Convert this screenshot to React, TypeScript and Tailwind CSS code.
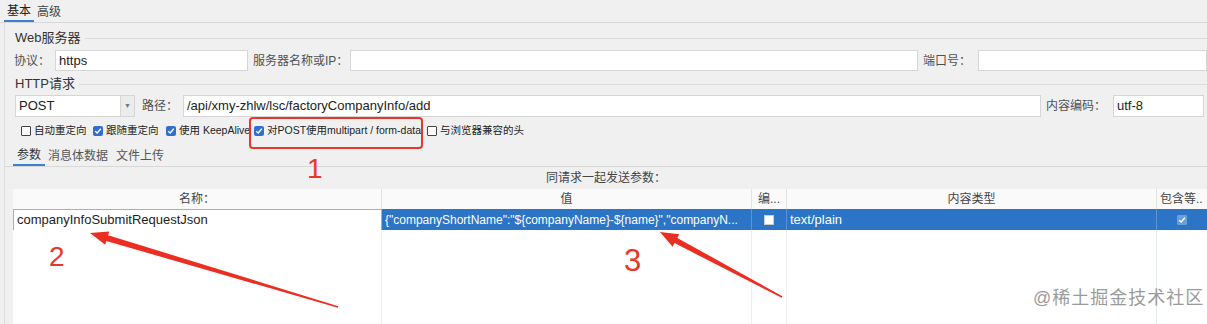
import React from "react";

const font = "font-['Liberation_Sans','Noto_Sans_CJK_SC',sans-serif]";

function Check({ on }: { on?: boolean }) {
	if (!on) return <span className="w-[10px] h-[10px] shrink-0 border border-[#444] bg-white rounded-[1px]" />;
	return (
		<span className="w-[10px] h-[10px] shrink-0 bg-[#2f6fce] rounded-[2px] flex items-center justify-center">
			<svg width="8" height="8" viewBox="0 0 8 8">
				<path d="M1.2 4.2 L3.2 6 L6.8 1.8" stroke="#fff" strokeWidth="1.4" fill="none" />
			</svg>
		</span>
	);
}

function Option({ on, label, w }: { on?: boolean; label: string; w: string }) {
	return (
		<div className={`flex items-center gap-[3px] shrink-0 ${w}`}>
			<Check on={on} />
			<span className="text-[10.5px] text-[#222] whitespace-nowrap">{label}</span>
		</div>
	);
}

function Section({ title }: { title: string }) {
	return (
		<div className="flex items-center h-[20px] pl-[10px] gap-[4px]">
			<span className="text-[13px] text-[#333] whitespace-nowrap">{title}</span>
			<div className="flex-1 border-t border-[#dcdcdc]" />
		</div>
	);
}

function Field({ w, value }: { w: string; value?: string }) {
	return (
		<div className={`h-full shrink-0 bg-white border border-[#d6d6d6] flex items-center px-[3px] text-[13px] text-[#222] ${w}`}>
			{value}
		</div>
	);
}

function Label({ w, text }: { w: string; text: string }) {
	return <span className={`shrink-0 whitespace-nowrap text-[12px] text-[#505050] ${w}`}>{text}</span>;
}

export default function App() {
	return (
		<div className={`relative w-[1207px] h-[324px] overflow-hidden bg-[#f0f0f0] ${font}`}>
			{/* top tabs */}
			<div className="flex items-end h-[23px] border-b border-[#d8d8d8] pl-[4px]">
				<div className="px-[3px] h-[20px] flex items-center text-[12px] text-[#222] border-b-2 border-[#3b7fd1]">基本</div>
				<div className="px-[3px] h-[20px] flex items-center text-[12px] text-[#444]">高级</div>
			</div>

			<div className="ml-[4px] border-l border-[#dedede] h-[301px] flex flex-col">
				<div className="mt-[5px]">
					<Section title="Web服务器" />
				</div>
				<div className="mt-[2px] h-[21px] flex items-center pl-[9px]">
					<Label w="w-[41px]" text="协议：" />
					<Field w="w-[193px]" value="https" />
					<Label w="w-[102px] pl-[5px]" text="服务器名称或IP：" />
					<Field w="w-[568px]" />
					<Label w="w-[60px] pl-[5px]" text="端口号：" />
					<Field w="flex-1" />
				</div>
				<div className="mt-[3px]">
					<Section title="HTTP请求" />
				</div>
				<div className="mt-[1px] h-[22px] flex items-center pl-[10px] pr-[3px]">
					<div className="w-[106px] shrink-0 h-full bg-white border border-[#d6d6d6] flex items-center px-[3px] text-[13px] text-[#222]">POST</div>
					<div className="w-[14px] shrink-0 h-full bg-[#ececec] border border-[#d6d6d6] border-l-0 flex items-center justify-center text-[7px] text-[#777]">▼</div>
					<Label w="w-[48px] pl-[7px]" text="路径：" />
					<Field w="w-[858px]" value="/api/xmy-zhlw/lsc/factoryCompanyInfo/add" />
					<Label w="w-[72px] pl-[5px]" text="内容编码：" />
					<Field w="flex-1" value="utf-8" />
				</div>
				<div className="mt-[5px] h-[18px] flex items-center pl-[16px]">
					<Option label="自动重定向" w="w-[72px]" />
					<Option on label="跟随重定向" w="w-[73px]" />
					<Option on label="使用 KeepAlive" w="w-[88px]" />
					<Option on label="对POST使用multipart / form-data" w="w-[173px]" />
					<Option label="与浏览器兼容的头" w="w-[120px]" />
				</div>
				<div className="mt-[5px] h-[22px] flex items-end pl-[8px] border-b border-[#d8d8d8]">
					<div className="px-[4px] h-[21px] flex items-center text-[12px] text-[#333] border-b-2 border-[#3b7fd1]">参数</div>
					<div className="px-[3px] h-[21px] flex items-center text-[12px] text-[#555]">消息体数据</div>
					<div className="px-[5px] h-[21px] flex items-center text-[12px] text-[#555]">文件上传</div>
				</div>
				<div className="h-[22px] flex items-end justify-center pb-[2px] text-[12px] text-[#444]">同请求一起发送参数：</div>

				{/* table */}
				<div className="flex-1 flex flex-col pl-[8px]">
					<div className="grid grid-cols-[369px_370px_35px_370px_1fr] h-[20px] bg-[#fafafa] text-[12px] text-[#444]">
						<div className="flex items-center justify-center border-r border-[#e2e2e2]">名称：</div>
						<div className="flex items-center justify-center border-r border-[#e2e2e2]">值</div>
						<div className="flex items-center justify-center border-r border-[#e2e2e2]">编...</div>
						<div className="flex items-center justify-center border-r border-[#e2e2e2]">内容类型</div>
						<div className="flex items-center pl-[3px] whitespace-nowrap">包含等..</div>
					</div>
					<div className="grid grid-cols-[369px_370px_35px_370px_1fr] h-[21px] bg-[#2c74c5] text-[13px] text-white">
						<div className="bg-white border border-[#8db5e3] flex items-center px-[3px] text-[#222]">companyInfoSubmitRequestJson</div>
						<div className="flex items-center px-[3px] border-r border-[#5c93d4] whitespace-nowrap overflow-hidden text-[12px]">
							{'{"companyShortName":"${companyName}-${name}","companyN...'}
						</div>
						<div className="flex items-center justify-center border-r border-[#5c93d4]">
							<span className="w-[10px] h-[10px] bg-white border border-[#ccc]" />
						</div>
						<div className="flex items-center px-[3px] border-r border-[#5c93d4]">text/plain</div>
						<div className="flex items-center justify-center">
							<span className="w-[10px] h-[10px] bg-[#6b9fdc] rounded-[1px] flex items-center justify-center">
								<svg width="8" height="8" viewBox="0 0 8 8">
									<path d="M1.2 4.2 L3.2 6 L6.8 1.8" stroke="#fff" strokeWidth="1.4" fill="none" />
								</svg>
							</span>
						</div>
					</div>
					<div className="flex-1 grid grid-cols-[369px_370px_35px_370px_1fr] bg-white">
						<div className="border-r border-[#eeeeee]" />
						<div className="border-r border-[#eeeeee]" />
						<div className="border-r border-[#eeeeee]" />
						<div className="border-r border-[#e4ebf3]" />
						<div />
					</div>
				</div>
			</div>

			{/* annotations */}
			<div className="absolute left-[249px] top-[117px] w-[174px] h-[32px] border-2 border-[#e8362c] rounded-[4px]" />
			<span className="absolute left-[307px] top-[155px] text-[28px] leading-none font-['Liberation_Sans',sans-serif] font-light text-[#e8362c]">1</span>
			<span className="absolute left-[49px] top-[243px] text-[28px] leading-none font-['Liberation_Sans',sans-serif] font-light text-[#e8362c]">2</span>
			<span className="absolute left-[624px] top-[245px] text-[31px] leading-none font-['Liberation_Sans',sans-serif] font-light text-[#e8362c]">3</span>
			<svg className="absolute left-0 top-0" width="1207" height="324" viewBox="0 0 1207 324">
				<polygon
					fill="#ec2d22"
					points="90,233 109.2,231.4 108.1,235.2 338.2,306.2 337.8,307.8 106.3,241 105.2,244.8"
				/>
				<polygon
					fill="#ec2d22"
					points="660,232 679.2,234.3 677.3,237.9 782.4,296.3 781.6,297.7 674.5,243.1 672.6,246.7"
				/>
			</svg>
			<span className="absolute left-[1033px] top-[289px] text-[18px] leading-none text-[#9b9b9b] tracking-[1px] [text-shadow:0_0_2px_#fff]">
				@稀土掘金技术社区
			</span>
		</div>
	);
}
